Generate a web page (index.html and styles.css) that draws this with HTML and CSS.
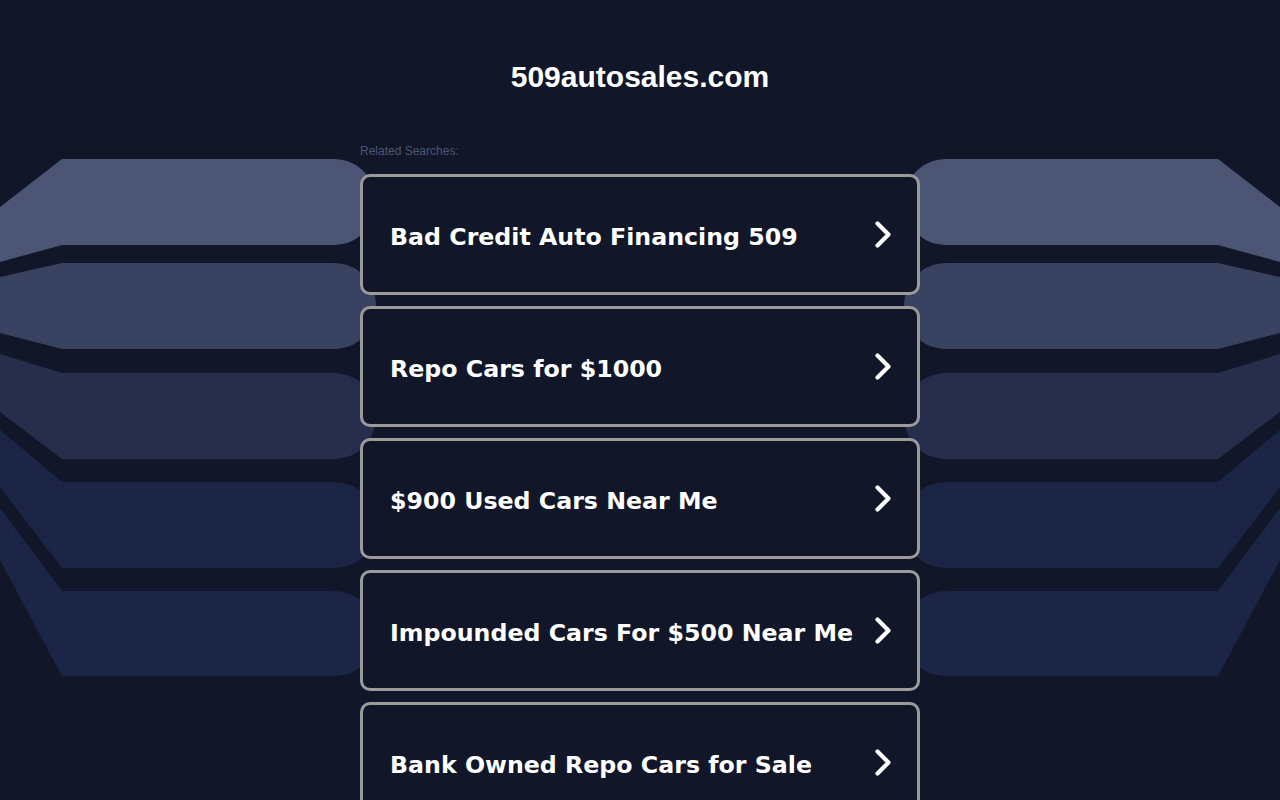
FILE: index.html
```html
<!DOCTYPE html>
<html lang="en">
  <head>
    <meta charset="UTF-8" />
    <meta name="viewport" content="width=device-width, initial-scale=1.0" />
    <link rel="stylesheet" href="styles.css">
    <title>509autosales.com</title>
  </head>
  <body>
    <!-- background bands -->
    <svg class="backdrop" viewBox="0 0 1280 800" aria-hidden="true">
      <defs>
        <pattern id="dots" width="3" height="3" patternUnits="userSpaceOnUse">
          <rect width="3" height="3" fill="#1c2446" />
          <rect x="1" y="1" width="1" height="1" fill="#212a4f" />
        </pattern>
        <g id="bands">
          <path fill="#4c5574" d="M0,207 L62,159 L333,159 C360,159 376,180 376,202 C376,224 360,245 333,245 L62,245 L0,262 Z" />
          <path fill="#3a4261" d="M0,277 L62,263 L333,263 C360,263 376,284 376,306 C376,328 360,349 333,349 L62,349 L0,333 Z" />
          <path fill="#262e4c" d="M0,354 L62,373 L333,373 C360,373 376,394 376,416 C376,438 360,459 333,459 L62,459 L0,412 Z" />
          <path fill="url(#dots)" d="M0,430 L62,482 L333,482 C360,482 376,503 376,525 C376,547 360,568 333,568 L62,568 L0,487 Z" />
          <path fill="url(#dots)" d="M0,508 L62,591 L333,591 C360,591 376,612 376,634 C376,656 360,676 333,676 L62,676 L0,560 Z" />
        </g>
      </defs>
      <use href="#bands" />
      <use href="#bands" transform="translate(1280,0) scale(-1,1)" />
    </svg>

    <div class="page">
      <h1 class="domain">509autosales.com</h1>

      <div class="related">
        <p class="related-title">Related Searches:</p>
        <ul class="links">
          <li><a href="#">Bad Credit Auto Financing 509<svg class="chevron" viewBox="0 0 17 27"><polyline points="2.5,2.5 13.5,13.5 2.5,24.5" /></svg></a></li>
          <li><a href="#">Repo Cars for $1000<svg class="chevron" viewBox="0 0 17 27"><polyline points="2.5,2.5 13.5,13.5 2.5,24.5" /></svg></a></li>
          <li><a href="#">$900 Used Cars Near Me<svg class="chevron" viewBox="0 0 17 27"><polyline points="2.5,2.5 13.5,13.5 2.5,24.5" /></svg></a></li>
          <li><a href="#">Impounded Cars For $500 Near Me<svg class="chevron" viewBox="0 0 17 27"><polyline points="2.5,2.5 13.5,13.5 2.5,24.5" /></svg></a></li>
          <li><a href="#">Bank Owned Repo Cars for Sale<svg class="chevron" viewBox="0 0 17 27"><polyline points="2.5,2.5 13.5,13.5 2.5,24.5" /></svg></a></li>
        </ul>
      </div>
    </div>
  </body>
</html>
```

FILE: styles.css
```css
/* Basic Style */

body {
  margin: 0;
  background: #111729;
  font-family: "Liberation Sans", Arial, sans-serif;
  color: #fff;
}

.backdrop {
  position: absolute;
  top: 0;
  left: 0;
  width: 1280px;
  height: 800px;
  z-index: 0;
  pointer-events: none;
}

.page {
  position: relative;
  z-index: 1;
  padding-top: 59px;
}

/* Heading */
.domain {
  margin: 0;
  font-size: 30px;
  line-height: 36px;
  font-weight: 700;
  text-align: center;
}

/* Related searches */
.related {
  width: 560px;
  margin: 49px auto 0;
}
.related-title {
  margin: 0;
  font-size: 12px;
  line-height: 14px;
  color: #4b5675;
}
.links {
  margin: 16px 0 0;
  padding: 0;
  list-style: none;
  display: flex;
  flex-direction: column;
  gap: 11px;
}
.links a {
  display: flex;
  align-items: center;
  justify-content: space-between;
  box-sizing: border-box;
  height: 121px;
  padding: 4px 25px 0 27px;
  border: 3px solid #9b9b9b;
  border-radius: 10px;
  background: #111729;
  color: #fff;
  text-decoration: none;
  font-family: "DejaVu Sans", Verdana, sans-serif;
  font-weight: 700;
  font-size: 23.7px;
}
.chevron {
  width: 17px;
  height: 27px;
  flex-shrink: 0;
  margin-top: -4px;
}
.chevron polyline {
  fill: none;
  stroke: #fff;
  stroke-width: 4.2;
  stroke-linecap: round;
  stroke-linejoin: round;
}
```
